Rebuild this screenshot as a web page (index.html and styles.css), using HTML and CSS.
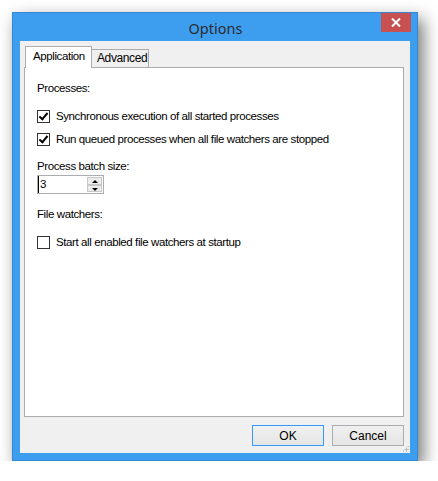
FILE: index.html
```html
<!DOCTYPE html>
<html lang="en">
    <head>
        <meta charset="UTF-8">
        <title>Options</title>
        <link rel="stylesheet" href="styles.css">
    </head>
    <body>
        <div class="window">
            <div class="titlebar">
                <span class="title">Options</span>
                <button class="close">
                    <svg width="10" height="9" viewBox="0 0 10 9">
                        <path d="M1 0.5 L9 8.5 M9 0.5 L1 8.5" stroke="#fff" stroke-width="2"/>
                    </svg>
                </button>
            </div>

            <div class="client">
                <div class="tabs">
                    <div class="tab active">Application</div>
                    <div class="tab">Advanced</div>
                </div>

                <div class="panel">
                    <p class="label first">Processes:</p>

                    <label class="check row1">
                        <span class="box checked"></span>
                        Synchronous execution of all started processes
                    </label>
                    <label class="check row2">
                        <span class="box checked"></span>
                        Run queued processes when all file watchers are stopped
                    </label>

                    <p class="label batch">Process batch size:</p>
                    <div class="spin">
                        <span class="value">3</span>
                        <div class="arrows">
                            <span class="up"></span>
                            <span class="down"></span>
                        </div>
                    </div>

                    <p class="label watchers">File watchers:</p>
                    <label class="check row3">
                        <span class="box"></span>
                        Start all enabled file watchers at startup
                    </label>
                </div>

                <div class="buttons">
                    <button class="btn default">OK</button>
                    <button class="btn">Cancel</button>
                </div>
                <div class="grip"></div>
            </div>
        </div>
    </body>
</html>
```

FILE: styles.css
```css
body {
    margin: 0;
    background-color: #fff;
    font-family: "Liberation Sans", Arial, sans-serif;
    font-size: 11.5px;
    letter-spacing: -0.4px;
    color: #000;
}
.window {
    margin: 12px 0 0 12px;
    width: 406px;
    height: 449px;
    box-sizing: border-box;
    background-color: #3d9ef0;
    border: 1px solid #3587d4;
    box-shadow: 5px 7px 16px rgba(0,0,0,0.55);
    display: flex;
    flex-direction: column;
}
.titlebar {
    height: 28px;
    display: flex;
    align-items: center;
    justify-content: center;
    position: relative;
}
.title {
    font-family: "Noto Sans", sans-serif;
    font-size: 14.5px;
    letter-spacing: 0;
    color: #2b2b2b;
    margin-top: 1px;
    margin-left: 1px;
}
.close {
    position: absolute;
    top: 0;
    right: 6px;
    width: 30px;
    height: 19px;
    border: none;
    padding: 0;
    background-color: #c75050;
    display: flex;
    align-items: center;
    justify-content: center;
}
.client {
    margin: 0 7px 7px 7px;
    flex: 1;
    background-color: #f0f0f0;
    padding: 5px 6px 0 4px;
    display: flex;
    flex-direction: column;
    position: relative;
}
.tabs {
    display: flex;
    align-items: flex-end;
    height: 21px;
    position: relative;
    z-index: 1;
}
.tab {
    box-sizing: border-box;
    height: 18px;
    padding: 1px 0 0 5px;
    border: 1px solid #acacac;
    border-bottom: none;
    background-color: #f0f0f0;
    line-height: 15px;
    font-size: 12px;
}
.tab.active {
    height: 22px;
    width: 67px;
    margin-left: 1px;
    margin-bottom: -1px;
    padding: 0 0 0 7px;
    background-color: #fff;
    line-height: 19px;
    font-size: 11.5px;
}
.tab + .tab {
    border-left: none;
    width: 57px;
}
.panel {
    height: 350px;
    box-sizing: border-box;
    background-color: #fff;
    border: 1px solid #acacac;
    padding: 0 0 0 12px;
    position: relative;
}
p {
    margin: 0;
}
.label {
    line-height: 15px;
}
.first {
    margin-top: 13px;
}
.check {
    display: flex;
    align-items: center;
    gap: 6px;
    height: 15px;
    line-height: 15px;
}
.row1 {
    margin-top: 13px;
}
.row2 {
    margin-top: 8px;
}
.batch {
    margin-top: 12px;
}
.watchers {
    margin-top: 13px;
}
.row3 {
    margin-top: 13px;
}
.box {
    width: 13px;
    height: 13px;
    box-sizing: border-box;
    border: 1px solid #333;
    background-color: #fff;
    position: relative;
}
.box.checked::after {
    content: "";
    position: absolute;
    left: 3px;
    top: 0px;
    width: 3px;
    height: 7px;
    border: solid #000;
    border-width: 0 2px 2px 0;
    transform: rotate(40deg);
}
.spin {
    margin-top: 1px;
    width: 67px;
    height: 19px;
    box-sizing: border-box;
    border: 1px solid #abadb3;
    background-color: #fff;
    display: flex;
    justify-content: space-between;
}
.value {
    line-height: 17px;
    padding-left: 1px;
    border-left: 1px solid #000;
}
.arrows {
    width: 15px;
    display: flex;
    flex-direction: column;
    margin: 1px;
}
.arrows span {
    flex: 1;
    background-color: #ececec;
    border: 1px solid #c8c8c8;
    position: relative;
}
.up::after,
.down::after {
    content: "";
    position: absolute;
    left: 4px;
    border-left: 3px solid transparent;
    border-right: 3px solid transparent;
}
.up::after {
    top: 2px;
    border-bottom: 3px solid #000;
}
.down::after {
    top: 2px;
    border-top: 3px solid #000;
}
.buttons {
    display: flex;
    justify-content: flex-end;
    gap: 8px;
    margin-top: 8px;
}
.btn {
    width: 72px;
    height: 21px;
    box-sizing: border-box;
    border: 1px solid #adadad;
    background: linear-gradient(#f0f0f0, #e5e5e5);
    font-family: "Liberation Sans", Arial, sans-serif;
    font-size: 12px;
    color: #000;
    padding: 0;
}
.btn.default {
    border-color: #3399ff;
}
.grip {
    position: absolute;
    right: 1px;
    bottom: 1px;
    width: 7px;
    height: 7px;
    background-image: radial-gradient(circle, #bcbcbc 1px, transparent 1.2px);
    background-size: 3px 3px;
    clip-path: polygon(100% 0, 100% 100%, 0 100%);
}
```
